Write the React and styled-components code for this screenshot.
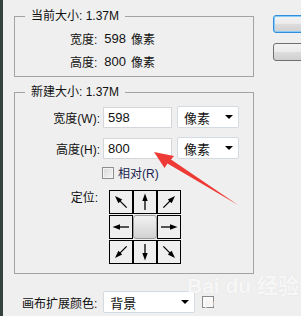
import React from 'react';
import styled, { createGlobalStyle } from 'styled-components';

const GlobalStyle = createGlobalStyle`
  html, body {
    margin: 0;
    padding: 0;
    background: #efefef;
  }
  body {
    font-family: "Liberation Sans", "Noto Sans CJK SC", sans-serif;
    font-size: 12px;
    color: #111;
  }
`;

const Dialog = styled.div`
  position: relative;
  width: 301px;
  height: 316px;
  overflow: hidden;
  display: flex;
  box-sizing: border-box;
  background: #efefef;
  border-left: 3px solid #34423f;
`;

const Main = styled.div`
  width: 252px;
  flex-shrink: 0;
  padding: 8px 0 0 11px;
  box-sizing: border-box;
`;

const Side = styled.div`
  display: flex;
  flex-direction: column;
  gap: 10px;
  padding: 15px 0 0 18px;
`;

const Button = styled.div`
  width: 64px;
  height: 18px;
  box-sizing: border-box;
  border-radius: 3px;
  border: 1px solid ${(p) => (p.$focus ? '#2f8fdc' : '#707070')};
  box-shadow: ${(p) => (p.$focus ? 'inset 0 0 0 1px #86ccf5' : 'none')};
  background: linear-gradient(#f3f3f3 0%, #ebebeb 50%, #dddddd 50%, #d0d0d0 100%);
`;

const Group = styled.fieldset`
  margin: ${(p) => (p.$first ? '0' : '7px 0 0 0')};
  padding: 0;
  width: 240px;
  min-width: 0;
  box-sizing: border-box;
  border: 1px solid #a3a3a3;
`;

const Legend = styled.legend`
  margin-left: 10px;
  padding: 0 6px;
  line-height: 16px;
  font-size: 12px;
`;

const InfoList = styled.div`
  display: grid;
  grid-auto-rows: 23px;
  align-items: center;
  padding: 3px 0 3px 55px;
`;

const InfoRow = styled.div`
  display: flex;
  align-items: center;
`;

const Num = styled.span`
  margin-left: ${(p) => p.$gap || 0}px;
  font-size: 13px;
`;

const Unit = styled.span`
  margin-left: 5px;
`;

const NewBody = styled.div`
  padding: 6px 0 9px 0;
`;

const FieldRow = styled.div`
  display: flex;
  align-items: center;
  height: 22px;
  margin-bottom: ${(p) => p.$mb || 0}px;
`;

const FieldLabel = styled.span`
  width: 85px;
  margin-right: 3px;
  text-align: right;
  white-space: nowrap;
`;

const TextBox = styled.div`
  width: 69px;
  height: 21px;
  box-sizing: border-box;
  border: 1px solid #d3d6da;
  background: #fff;
  padding: 0 4px;
  display: flex;
  align-items: center;
  font-size: 13px;
  margin-right: 5px;
`;

const Select = styled.div`
  width: ${(p) => p.$w}px;
  height: 22px;
  box-sizing: border-box;
  border: 1px solid #d5dbe2;
  border-radius: 2px;
  background: #fff;
  display: flex;
  align-items: center;
  justify-content: space-between;
  padding: 0 5px 0 6px;
  font-size: 13px;
`;

const Caret = styled.span`
  width: 0;
  height: 0;
  border-left: 4px solid transparent;
  border-right: 4px solid transparent;
  border-top: 4px solid #000;
`;

const CheckRow = styled.label`
  display: flex;
  align-items: center;
  gap: 4px;
  padding-left: 87px;
  margin-top: 7px;
  height: 13px;
`;

const CheckBox = styled.span`
  width: 12px;
  height: 12px;
  box-sizing: border-box;
  border: 1px solid #8e8f8f;
  background: linear-gradient(135deg, #d8d8d8, #f6f6f6);
  box-shadow: inset 0 0 0 1px #f4f4f4;
`;

const CheckText = styled.span`
  color: #1b2550;
  font-size: 12px;
`;

const PositionRow = styled.div`
  display: flex;
  align-items: flex-start;
  margin-top: 11px;
`;

const PositionLabel = styled.span`
  width: 83px;
  margin-right: 11px;
  text-align: right;
  line-height: 16px;
`;

const AnchorGrid = styled.div`
  display: grid;
  grid-template-columns: repeat(3, 24px);
  grid-auto-rows: 24px;
  row-gap: 1px;
`;

const Cell = styled.div`
  box-sizing: border-box;
  display: flex;
  align-items: center;
  justify-content: center;
  border: 1px solid ${(p) => (p.$active ? '#9a9a9a' : '#000')};
  border-radius: ${(p) => (p.$active ? '3px' : '0')};
  background: ${(p) => (p.$active ? 'linear-gradient(#f2f2f2, #d2d2d2)' : '#efefef')};
`;

const FooterRow = styled.div`
  display: flex;
  align-items: center;
  margin-top: 17px;
  padding-left: 8px;
`;

const FooterLabel = styled.span`
  margin-right: 6px;
`;

const Swatch = styled.span`
  width: 12px;
  height: 12px;
  margin-left: 7px;
  box-sizing: border-box;
  border: 1px solid #8a8a8a;
  background: #fafafa;
`;

const Watermark = styled.div`
  position: absolute;
  left: 184px;
  top: 274px;
  color: rgba(255, 255, 255, 0.75);
  text-shadow: 0 0 1px rgba(190, 190, 190, 0.35);
  font-family: "Liberation Sans", "Noto Sans CJK SC", sans-serif;
  pointer-events: none;
`;

const MarkBig = styled.div`
  font-size: 21px;
  font-weight: bold;
  line-height: 24px;
`;

const MarkSmall = styled.div`
  font-size: 9px;
  line-height: 10px;
  margin-left: 18px;
`;

const Overlay = styled.svg`
  position: absolute;
  left: 0;
  top: 0;
  pointer-events: none;
`;

const Arrow = ({ angle }) => (
  <svg width="20" height="20" viewBox="0 0 20 20">
    <g transform={`rotate(${angle} 10 10)`}>
      <line x1="10" y1="18" x2="10" y2="7" stroke="#000" strokeWidth="1.3" />
      <polygon points="10,1.5 7.3,9 12.7,9" fill="#000" />
    </g>
  </svg>
);

const anchors = [315, 0, 45, 270, null, 90, 225, 180, 135];

export default function App() {
  return (
    <>
      <GlobalStyle />
      <Dialog>
        <Main>
          <Group $first>
            <Legend>当前大小: 1.37M</Legend>
            <InfoList>
              <InfoRow>
                宽度:<Num $gap={7}>598</Num>
                <Unit>像素</Unit>
              </InfoRow>
              <InfoRow>
                高度:<Num $gap={7}>800</Num>
                <Unit>像素</Unit>
              </InfoRow>
            </InfoList>
          </Group>

          <Group>
            <Legend>新建大小: 1.37M</Legend>
            <NewBody>
              <FieldRow $mb={9}>
                <FieldLabel>宽度(W):</FieldLabel>
                <TextBox>598</TextBox>
                <Select $w={62}>
                  像素
                  <Caret />
                </Select>
              </FieldRow>
              <FieldRow>
                <FieldLabel>高度(H):</FieldLabel>
                <TextBox>800</TextBox>
                <Select $w={62}>
                  像素
                  <Caret />
                </Select>
              </FieldRow>
              <CheckRow>
                <CheckBox />
                <CheckText>相对(R)</CheckText>
              </CheckRow>
              <PositionRow>
                <PositionLabel>定位:</PositionLabel>
                <AnchorGrid>
                  {anchors.map((a, i) => (
                    <Cell key={i} $active={a === null}>
                      {a !== null && <Arrow angle={a} />}
                    </Cell>
                  ))}
                </AnchorGrid>
              </PositionRow>
            </NewBody>
          </Group>

          <FooterRow>
            <FooterLabel>画布扩展颜色:</FooterLabel>
            <Select $w={92}>
              背景
              <Caret />
            </Select>
            <Swatch />
          </FooterRow>
        </Main>

        <Side>
          <Button $focus />
          <Button />
        </Side>

        <Watermark>
          <MarkBig>Bai du 经验</MarkBig>
          <MarkSmall>jingyan.baidu.com</MarkSmall>
        </Watermark>

        <Overlay width="301" height="316" viewBox="3 0 301 316">
          <polygon
            points="154,152 174,156 171,159.5 238,205 167.5,163.5 164.5,168"
            fill="#ee3a34"
          />
        </Overlay>
      </Dialog>
    </>
  );
}
